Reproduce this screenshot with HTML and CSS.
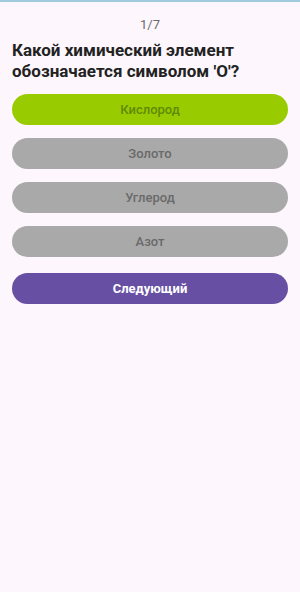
FILE: index.html
```html
<!DOCTYPE html>
<html>
<head>
<meta charset="utf-8">
<link rel="stylesheet" href="styles.css">
</head>
<body>
<div class="topline"></div>
<main class="screen">
  <div class="counter">1/7</div>
  <h1 class="question">Какой химический элемент обозначается символом 'O'?</h1>
  <div class="options">
    <button class="opt correct">Кислород</button>
    <button class="opt">Золото</button>
    <button class="opt">Углерод</button>
    <button class="opt">Азот</button>
  </div>
  <button class="next">Следующий</button>
</main>
</body>
</html>
```
FILE: styles.css
```css
html, body {
  margin: 0;
  padding: 0;
  background: #fdf7fd;
  font-family: Roboto, "Noto Sans", sans-serif;
}
.topline {
  height: 2px;
  background: #9fc9dc;
}
.screen {
  padding: 0 12px;
  display: flex;
  flex-direction: column;
}
.counter {
  margin-top: 15px;
  text-align: center;
  font-size: 13px;
  color: #6b6b6b;
  line-height: 16px;
}
.question {
  margin: 7px 0 0;
  font-size: 17px;
  font-weight: 700;
  line-height: 21px;
  color: #222222;
}
.options {
  margin-top: 12px;
  display: flex;
  flex-direction: column;
  gap: 13px;
}
button {
  border: none;
  font-family: Roboto, "Noto Sans", sans-serif;
  width: 100%;
  height: 31px;
  border-radius: 16px;
  padding: 0;
}
.opt {
  background: #a9a9a9;
  color: #6a6a6a;
  font-size: 13px;
  font-weight: 500;
}
.opt.correct {
  background: #99cc00;
  color: #5f8a05;
}
.next {
  margin-top: 16px;
  background: #6750a4;
  color: #ffffff;
  font-size: 13px;
  font-weight: 700;
}
```
